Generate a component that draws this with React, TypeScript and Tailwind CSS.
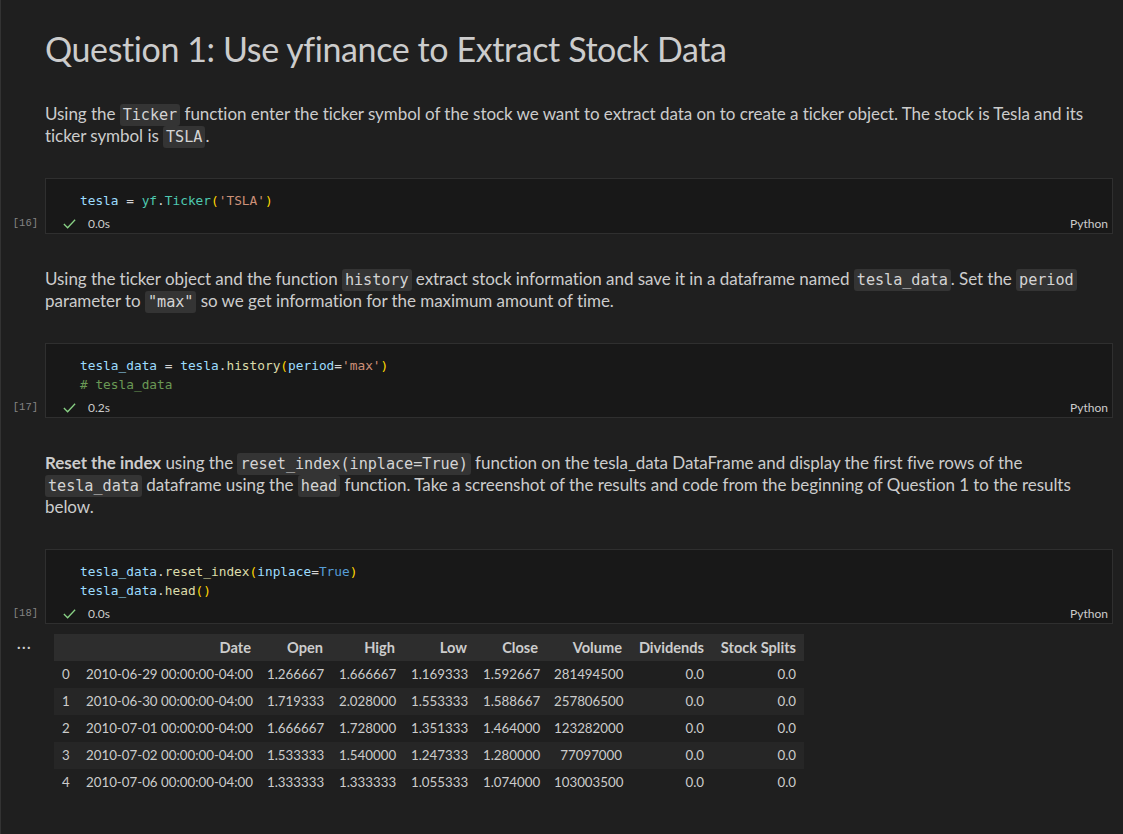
import React from "react";

const C = {
  v: "text-[#9cdcfe]",
  t: "text-[#4ec9b0]",
  f: "text-[#dcdcaa]",
  s: "text-[#ce9178]",
  p: "text-[#ffd700]",
  k: "text-[#569cd6]",
  c: "text-[#6a9955]",
  o: "text-[#d4d4d4]",
};

function IC({ children }: { children: React.ReactNode }) {
  return (
    <code className="font-['DejaVu_Sans_Mono',monospace] text-[15.2px] leading-none bg-[#343434] text-[#d4d4d4] rounded-[3px] px-[3px] py-[2px]">
      {children}
    </code>
  );
}

function Check() {
  return (
    <svg width="15" height="15" viewBox="0 0 16 16" fill="none">
      <path d="M2 8.5 L6 12.5 L14 4" stroke="#89d185" strokeWidth="1.4" />
    </svg>
  );
}

function CodeCell({ n, t, lines }: { n: number; t: string; lines: React.ReactNode[] }) {
  return (
    <div className="flex">
      <div className="w-[45px] flex flex-col justify-end items-end pr-[7px] pb-[3px]">
        <span className="font-['Liberation_Mono',monospace] text-[10.5px] text-[#858585] leading-[16px]">[{n}]</span>
      </div>
      <div className="flex-1 mr-[10px] bg-[#181818] border border-[#2f2f2f]">
        <div className="pt-[12px] pl-[34px] font-['DejaVu_Sans_Mono',monospace] text-[12.8px] leading-[19px] whitespace-pre text-[#d4d4d4]">
          {lines.map((l, i) => (
            <div key={i}>{l}</div>
          ))}
        </div>
        <div className="mt-[4px] h-[19px] flex items-center pl-[16px] pr-[4px] font-['Lato',sans-serif] text-[12px] text-[#cccccc]">
          <Check />
          <span className="ml-[11px]">{t}</span>
          <span className="ml-auto">Python</span>
        </div>
      </div>
    </div>
  );
}

const rows = [
  ["0", "2010-06-29 00:00:00-04:00", "1.266667", "1.666667", "1.169333", "1.592667", "281494500", "0.0", "0.0"],
  ["1", "2010-06-30 00:00:00-04:00", "1.719333", "2.028000", "1.553333", "1.588667", "257806500", "0.0", "0.0"],
  ["2", "2010-07-01 00:00:00-04:00", "1.666667", "1.728000", "1.351333", "1.464000", "123282000", "0.0", "0.0"],
  ["3", "2010-07-02 00:00:00-04:00", "1.533333", "1.540000", "1.247333", "1.280000", "77097000", "0.0", "0.0"],
  ["4", "2010-07-06 00:00:00-04:00", "1.333333", "1.333333", "1.055333", "1.074000", "103003500", "0.0", "0.0"],
];
const heads = ["", "Date", "Open", "High", "Low", "Close", "Volume", "Dividends", "Stock Splits"];
const widths = [24, 181, 72, 72, 72, 71, 84, 82, 92];

export default function App() {
  return (
    <div className="w-full h-[834px] overflow-hidden bg-[#1f1f1f] border-l border-[#333333] text-[#cccccc] font-['Lato',sans-serif]">
      <div className="pt-[27px] pl-[44px] pr-[10px]">
        <h1 className="text-[34px] leading-[44px] tracking-[-0.4px] font-normal text-[#cccccc]">
          Question 1: Use yfinance to Extract Stock Data
        </h1>
        <p className="mt-[32px] text-[17px] leading-[22px] tracking-[-0.05px]">
          Using the <IC>Ticker</IC> function enter the ticker symbol of the stock we want to extract data on to create a
          ticker object. The stock is Tesla and its ticker symbol is <IC>TSLA</IC>.
        </p>
      </div>
      <div className="mt-[31px] -ml-px">
        <CodeCell
          n={16}
          t="0.0s"
          lines={[
            <>
              <span className={C.v}>tesla</span> = <span className={C.t}>yf</span>.<span className={C.t}>Ticker</span>
              <span className={C.p}>(</span>
              <span className={C.s}>'TSLA'</span>
              <span className={C.p}>)</span>
            </>,
          ]}
        />
      </div>
      <div className="mt-[34px] pl-[44px] pr-[10px]">
        <p className="text-[17px] leading-[22px] tracking-[-0.05px]">
          Using the ticker object and the function <IC>history</IC> extract stock information and save it in a dataframe
          named <IC>tesla_data</IC>. Set the <IC>period</IC> parameter to <IC>"max"</IC> so we get information for the
          maximum amount of time.
        </p>
      </div>
      <div className="mt-[31px] -ml-px">
        <CodeCell
          n={17}
          t="0.2s"
          lines={[
            <>
              <span className={C.v}>tesla_data</span> = <span className={C.v}>tesla</span>.
              <span className={C.f}>history</span>
              <span className={C.p}>(</span>
              <span className={C.v}>period</span>=<span className={C.s}>'max'</span>
              <span className={C.p}>)</span>
            </>,
            <span className={C.c}># tesla_data</span>,
          ]}
        />
      </div>
      <div className="mt-[34px] pl-[44px] pr-[10px]">
        <p className="text-[17px] leading-[22px] tracking-[-0.05px]">
          <b className="font-bold">Reset the index</b> using the <IC>reset_index(inplace=True)</IC> function on the
          tesla_data DataFrame and display the first five rows of the <IC>tesla_data</IC> dataframe using the{" "}
          <IC>head</IC> function. Take a screenshot of the results and code from the beginning of Question 1 to the
          results below.
        </p>
      </div>
      <div className="mt-[31px] -ml-px">
        <CodeCell
          n={18}
          t="0.0s"
          lines={[
            <>
              <span className={C.v}>tesla_data</span>.<span className={C.f}>reset_index</span>
              <span className={C.p}>(</span>
              <span className={C.v}>inplace</span>=<span className={C.k}>True</span>
              <span className={C.p}>)</span>
            </>,
            <>
              <span className={C.v}>tesla_data</span>.<span className={C.f}>head</span>
              <span className={C.p}>()</span>
            </>,
          ]}
        />
      </div>
      <div className="flex mt-[10px] -ml-px">
        <div className="w-[54px] pl-[17px] pt-[2px] text-[15px] leading-[14px] tracking-[1.5px] font-bold text-[#cccccc]">...</div>
        <table className="table-fixed w-[750px] border-collapse text-[13.3px] text-[#cccccc]">
          <colgroup>
            {widths.map((w, i) => (
              <col key={i} style={{ width: w }} />
            ))}
          </colgroup>
          <thead>
            <tr className="bg-[#2d2d2d] h-[27px]">
              {heads.map((h, i) => (
                <th key={i} className="px-[8px] text-right text-[14.6px] font-bold whitespace-nowrap">
                  {h}
                </th>
              ))}
            </tr>
          </thead>
          <tbody>
            {rows.map((r, ri) => (
              <tr key={ri} className={ri % 2 === 1 ? "h-[27px] bg-[#262626]" : "h-[27px]"}>
                {r.map((c, ci) => (
                  <td key={ci} className={ci === 0 ? "px-[8px] text-left" : "px-[8px] text-right whitespace-nowrap"}>
                    {c}
                  </td>
                ))}
              </tr>
            ))}
          </tbody>
        </table>
      </div>
    </div>
  );
}
